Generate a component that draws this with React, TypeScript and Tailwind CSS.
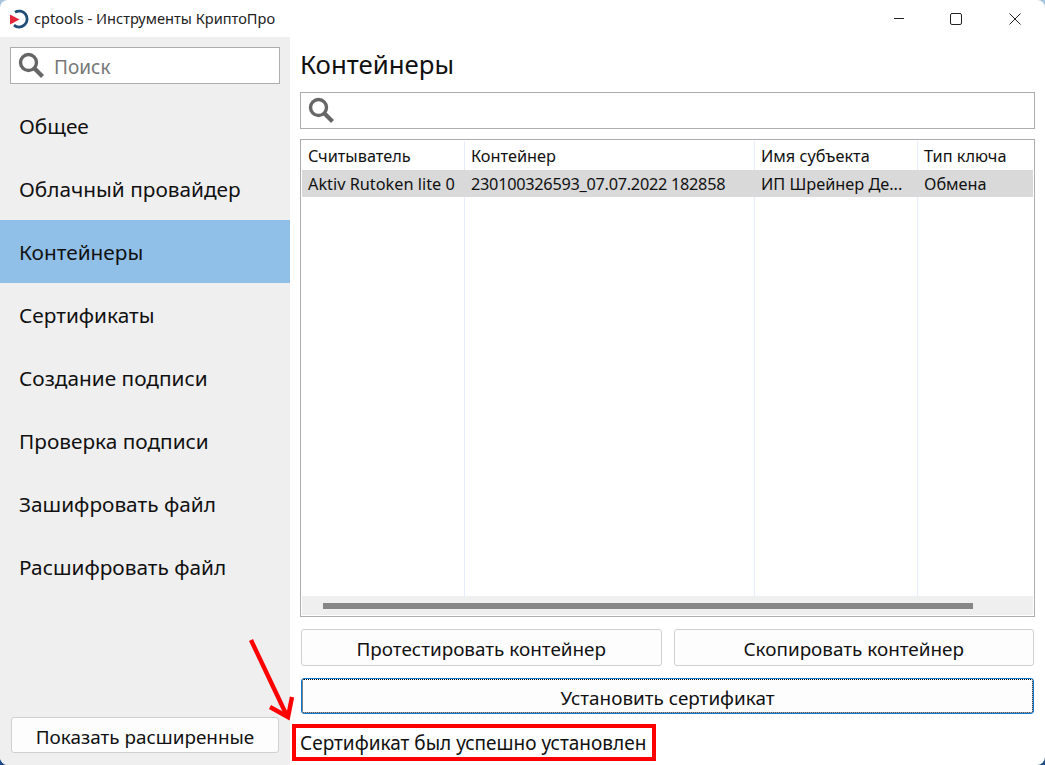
import React from 'react';

const navItems = [
  'Общее',
  'Облачный провайдер',
  'Контейнеры',
  'Сертификаты',
  'Создание подписи',
  'Проверка подписи',
  'Зашифровать файл',
  'Расшифровать файл',
];

const columns = [
  { title: 'Считыватель', value: 'Aktiv Rutoken lite 0', valueClass: '' },
  { title: 'Контейнер', value: '230100326593_07.07.2022 182858', valueClass: 'tracking-[-0.27px]' },
  { title: 'Имя субъекта', value: 'ИП Шрейнер Де...', valueClass: '' },
  { title: 'Тип ключа', value: 'Обмена', valueClass: '' },
];

function SearchIcon() {
  return (
    <svg width="28" height="28" viewBox="0 0 28 28" fill="none" stroke="#666666" className="mb-[2px] shrink-0">
      <circle cx="11.5" cy="11.5" r="8" strokeWidth="3.4" />
      <path d="M17.5 17.5L25.5 25.5" strokeWidth="4.2" />
    </svg>
  );
}

function ActionButton({ label, focused, className }: { label: string; focused?: boolean; className?: string }) {
  return (
    <button
      className={`flex items-center justify-center rounded-[3px] border bg-[#fdfdfd] pt-[4px] text-[18.9px] text-[#111] ${
        focused ? 'border-[#0f78d4] outline-1 -outline-offset-2 outline-dotted outline-black' : 'border-[#d0d0d0]'
      } ${className ?? ''}`}
    >
      {label}
    </button>
  );
}

export default function App() {
  return (
    <div className="relative h-[765px] w-[1045px] overflow-hidden bg-linear-to-b from-[#a8c4dc] to-[#1d4a86] font-['Noto_Sans','Open_Sans',sans-serif] text-[#111]">
      <div className="flex h-full flex-col overflow-hidden rounded-[8px] bg-white">
        {/* Title bar */}
        <div className="flex h-[37px] shrink-0 items-center pl-[9px]">
          <svg width="20" height="20" viewBox="0 0 20 20" fill="none" className="mr-[5px]">
            <path d="M6 3.2A8 8 0 1 1 5 16.2" stroke="#1f4e79" strokeWidth="2.8" />
            <path d="M1 5.5L10.5 10.5L1 15.5Z" fill="#e3263a" />
          </svg>
          <span className="text-[14.6px] text-[#222]">cptools - Инструменты КриптоПро</span>
          <div className="ml-auto flex h-full items-center pr-px">
            <div className="flex w-[54px] justify-center">
              <div className="h-px w-[10px] bg-[#222]" />
            </div>
            <div className="flex w-[60px] justify-center">
              <div className="h-[12px] w-[12px] rounded-[2px] border border-[#222]" />
            </div>
            <div className="flex w-[58px] justify-center">
              <svg width="12" height="12" viewBox="0 0 12 12" stroke="#222" strokeWidth="1">
                <path d="M0.5 0.5L11.5 11.5M11.5 0.5L0.5 11.5" />
              </svg>
            </div>
          </div>
        </div>

        <div className="flex min-h-0 flex-1">
          {/* Sidebar */}
          <aside className="flex w-[290px] shrink-0 flex-col bg-[#efefef] pb-[12px]">
            <div className="mx-[10px] mt-[10px] flex h-[37px] items-center gap-[9px] border border-[#adadad] bg-white pl-[6px]">
              <SearchIcon />
              <span className="pt-[4px] text-[19px] text-[#777]">Поиск</span>
            </div>
            <nav className="mt-[10px] flex flex-col">
              {navItems.map((item) => (
                <div
                  key={item}
                  className={`flex h-[63px] items-center pl-[19px] pt-[2px] text-[20.8px] ${
                    item === 'Контейнеры' ? 'bg-[#90c0e8]' : ''
                  }`}
                >
                  {item}
                </div>
              ))}
            </nav>
            <ActionButton label="Показать расширенные" className="mx-[11px] mt-auto h-[36px]" />
          </aside>

          {/* Main panel */}
          <main className="flex min-w-0 flex-1 flex-col pl-[10px] pr-[10px]">
            <h1 className="mt-[9px] h-[37px] text-[25.8px] leading-[37px] text-[#111]">Контейнеры</h1>
            <div className="mt-[9px] flex h-[37px] items-center border border-[#adadad] pl-[6px]">
              <SearchIcon />
            </div>
            <div className="mt-[10px] flex h-[478px] flex-col border border-[#adadad] p-px">
              <div className="grid min-h-0 flex-1 grid-cols-[163px_290px_163px_1fr] grid-rows-[29px_27px_1fr] text-[16.3px]">
                {columns.map((col, i) => (
                  <div
                    key={col.title}
                    className={`flex items-center px-[6px] pt-[2px] ${i < 3 ? 'border-r border-[#e3eefa]' : ''}`}
                  >
                    {col.title}
                  </div>
                ))}
                {columns.map((col) => (
                  <div
                    key={col.value}
                    className={`flex items-center whitespace-nowrap bg-[#d9d9d9] px-[6px] pt-[2px] ${col.valueClass}`}
                  >
                    {col.value}
                  </div>
                ))}
                {columns.map((col, i) => (
                  <div key={col.title} className={i < 3 ? 'border-r border-[#e3eefa]' : ''} />
                ))}
              </div>
              <div className="flex h-[19px] shrink-0 items-center bg-[#efefef] pl-[21px]">
                <div className="h-[6px] w-[650px] bg-[#868686]" />
              </div>
            </div>
            <div className="mr-px mt-[12px] flex h-[37px] gap-[12px] pl-px">
              <ActionButton label="Протестировать контейнер" className="flex-1" />
              <ActionButton label="Скопировать контейнер" className="flex-1" />
            </div>
            <ActionButton label="Установить сертификат" focused className="ml-px mr-px mt-[12px] h-[36px]" />
            <div className="-ml-[8px] mt-[10px] flex h-[37px] w-[364px] items-center border-[4px] border-[#fe0000] pl-[4px] pt-[2px] text-[19px]">
              Сертификат был успешно установлен
            </div>
          </main>
        </div>
      </div>

      {/* Annotation arrow */}
      <svg width="60" height="90" viewBox="0 0 60 90" fill="none" stroke="#fe0000" strokeWidth="4.4" className="absolute left-[240px] top-[635px]">
        <path d="M11 5L47 81" />
        <path d="M30 72L48 82L52 62" />
      </svg>
    </div>
  );
}
